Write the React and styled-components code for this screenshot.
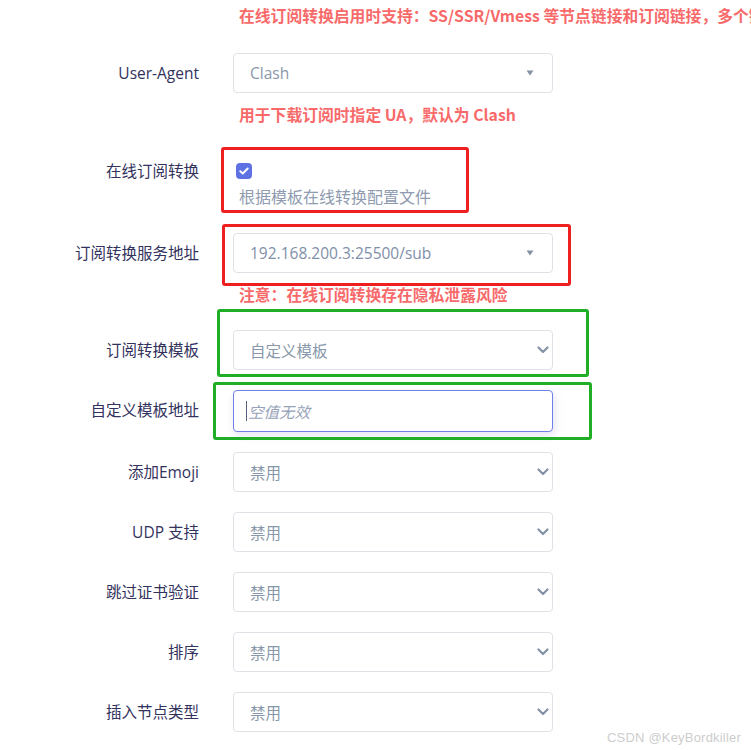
import React from "react";
import styled, { createGlobalStyle } from "styled-components";

const GlobalStyle = createGlobalStyle`
  html, body {
    margin: 0;
    padding: 0;
    background: #fff;
    overflow: hidden;
  }
  body {
    font-family: "Open Sans", "Noto Sans CJK SC", sans-serif;
  }
`;

const Page = styled.div`
  position: relative;
  width: 751px;
  height: 750px;
  overflow: hidden;
  background: #fff;
`;

const TopNote = styled.div`
  margin-left: 239px;
  margin-top: 4px;
  height: 22px;
  line-height: 22px;
  white-space: nowrap;
  font: bold 15.8px "Noto Sans CJK SC", "Liberation Sans", sans-serif;
  color: #f86a6a;
`;

const Row = styled.div`
  display: grid;
  grid-template-columns: 199px 320px;
  column-gap: 34px;
  align-items: start;
  margin-top: ${(p) => p.$top || 20}px;
`;

const Label = styled.label`
  text-align: right;
  font-size: 15.5px;
  color: #32325d;
  line-height: ${(p) => p.$lh || 40}px;
  white-space: nowrap;
`;

const Field = styled.div`
  position: relative;
  display: flex;
  flex-direction: column;
`;

const SelectBox = styled.div`
  box-sizing: border-box;
  height: 40px;
  border: 1px solid #dee2e6;
  border-radius: 4px;
  display: flex;
  align-items: center;
  justify-content: space-between;
  padding: 0 ${(p) => (p.$caret ? 18 : 3)}px 0 16px;
  font-size: 15.5px;
  color: ${(p) => (p.$dark ? "#7f8fa8" : "#8898aa")};
  background: #fff;
`;

const TextInput = styled.div`
  box-sizing: border-box;
  height: 42px;
  border: 1px solid #6f80e6;
  border-radius: 4px;
  display: flex;
  align-items: center;
  padding-left: 12px;
  font-size: 15.5px;
  font-style: italic;
  color: #97a3b8;
  box-shadow: 0 3px 9px rgba(50, 50, 93, 0.06), 3px 4px 8px rgba(94, 114, 228, 0.1);
`;

const Cursor = styled.span`
  display: inline-block;
  width: 1px;
  height: 20px;
  background: #525f7f;
  margin-right: 1px;
`;

const Help = styled.div`
  margin-top: 10px;
  padding-left: 6px;
  height: 22px;
  line-height: 22px;
  white-space: nowrap;
  font: bold 15.8px "Noto Sans CJK SC", "Liberation Sans", sans-serif;
  color: #f86a6a;
`;

const CheckLine = styled.div`
  height: 24px;
  display: flex;
  align-items: center;
  padding-left: 3px;
`;

const Check = styled.span`
  width: 16px;
  height: 16px;
  border-radius: 4px;
  background: #5e72e4;
  display: flex;
  align-items: center;
  justify-content: center;
`;

const Description = styled.div`
  margin-top: 3px;
  padding-left: 6px;
  height: 22px;
  line-height: 22px;
  font-size: 16px;
  color: #8f9bb0;
  white-space: nowrap;
`;

const Mark = styled.div`
  position: absolute;
  left: ${(p) => p.$l}px;
  top: ${(p) => p.$t}px;
  width: ${(p) => p.$w}px;
  height: ${(p) => p.$h}px;
  box-sizing: border-box;
  border: 3px solid ${(p) => (p.$green ? "#1fae25" : "#ee1f1f")};
  border-radius: 3px;
  pointer-events: none;
`;

const Watermark = styled.div`
  position: absolute;
  right: 10px;
  bottom: 5px;
  font: 13px "Liberation Sans", sans-serif;
  color: #cdcdcd;
  letter-spacing: 0.2px;
`;

function Triangle() {
  return (
    <svg width="8" height="6" viewBox="0 0 8 6">
      <path d="M0.5 0.5h7L4 5.5z" fill="#8492a6" />
    </svg>
  );
}

function Chevron() {
  return (
    <svg width="12" height="8" viewBox="0 0 12 8">
      <path d="M1.5 1.5L6 6l4.5-4.5" fill="none" stroke="#8492a6" strokeWidth="2.2" strokeLinecap="round" strokeLinejoin="round" />
    </svg>
  );
}

function Select({ value, caret, dark }) {
  return (
    <SelectBox $caret={caret} $dark={dark}>
      <span>{value}</span>
      {caret ? <Triangle /> : <Chevron />}
    </SelectBox>
  );
}

const toggles = ["添加Emoji", "UDP 支持", "跳过证书验证", "排序", "插入节点类型"];

export default function App() {
  return (
    <Page>
      <GlobalStyle />
      <TopNote>
        在线订阅转换启用时支持：SS/SSR/Vmess 等节点链接和订阅链接，多个链接每行一个或以 | 分隔
      </TopNote>

      <Row $top={27}>
        <Label>User-Agent</Label>
        <Field>
          <Select value="Clash" caret />
          <Help>用于下载订阅时指定 UA，默认为 Clash</Help>
        </Field>
      </Row>

      <Row $top={34}>
        <Label $lh={24}>在线订阅转换</Label>
        <Field>
          <CheckLine>
            <Check>
              <svg width="10" height="8" viewBox="0 0 10 8">
                <path d="M1.3 4.2L3.8 6.5 8.7 1.5" fill="none" stroke="#fff" strokeWidth="1.9" strokeLinecap="round" strokeLinejoin="round" />
              </svg>
            </Check>
          </CheckLine>
          <Description>根据模板在线转换配置文件</Description>
          <Mark $l={-12} $t={-12} $w={248} $h={66} />
        </Field>
      </Row>

      <Row $top={25}>
        <Label>订阅转换服务地址</Label>
        <Field>
          <Select value="192.168.200.3:25500/sub" caret dark />
          <Help>注意：在线订阅转换存在隐私泄露风险</Help>
          <Mark $l={-11} $t={-9} $w={349} $h={62} />
        </Field>
      </Row>

      <Row $top={25}>
        <Label>订阅转换模板</Label>
        <Field>
          <Select value="自定义模板" />
          <Mark $green $l={-16} $t={-21} $w={372} $h={68} />
        </Field>
      </Row>

      <Row $top={20}>
        <Label>自定义模板地址</Label>
        <Field>
          <TextInput>
            <Cursor />
            空值无效
          </TextInput>
          <Mark $green $l={-20} $t={-8} $w={379} $h={58} />
        </Field>
      </Row>

      {toggles.map((name) => (
        <Row key={name}>
          <Label>{name}</Label>
          <Field>
            <Select value="禁用" />
          </Field>
        </Row>
      ))}

      <Watermark>CSDN @KeyBordkiller</Watermark>
    </Page>
  );
}
